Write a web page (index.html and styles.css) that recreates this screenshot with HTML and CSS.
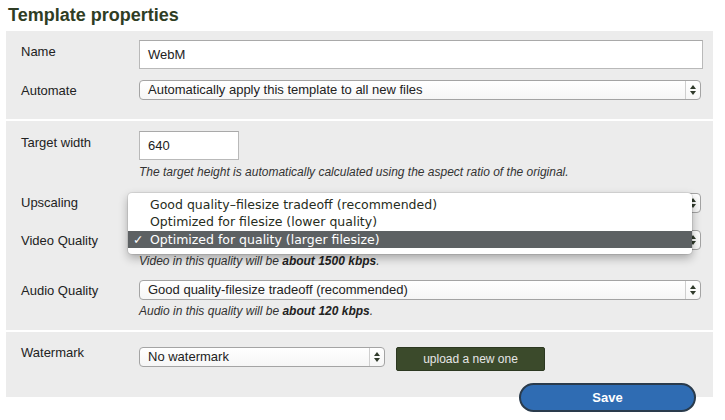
FILE: index.html
```html
<!DOCTYPE html>
<html>
<head>
<meta charset="utf-8">
<link rel="stylesheet" href="styles.css">
</head>
<body>
<h1 class="title">Template properties</h1>

<section class="panel panel-1">
  <div class="row">
    <div class="label">Name</div>
    <div class="field"><div class="input input-wide">WebM</div></div>
  </div>
  <div class="row row-auto">
    <div class="label">Automate</div>
    <div class="field"><div class="select select-wide"><span class="sel-text">Automatically apply this template to all new files</span><span class="arrows"><i class="up"></i><i class="down"></i></span></div></div>
  </div>
</section>

<section class="panel panel-2">
  <div class="row">
    <div class="label">Target width</div>
    <div class="field">
      <div class="input input-small">640</div>
      <div class="hint hint-first">The target height is automatically calculated using the aspect ratio of the original.</div>
    </div>
  </div>
  <div class="row row-up">
    <div class="label">Upscaling</div>
    <div class="field"><div class="select select-wide"><span class="sel-text">Good quality-filesize tradeoff (recommended)</span><span class="arrows"><i class="up"></i><i class="down"></i></span></div></div>
  </div>
  <div class="row row-video">
    <div class="label">Video Quality</div>
    <div class="field">
      <div class="select select-wide"><span class="sel-text">Optimized for quality (larger filesize)</span><span class="arrows"><i class="up"></i><i class="down"></i></span></div>
      <div class="hint">Video in this quality will be <b>about 1500 kbps</b>.</div>
    </div>
  </div>
  <div class="row row-audio">
    <div class="label">Audio Quality</div>
    <div class="field">
      <div class="select select-wide"><span class="sel-text">Good quality-filesize tradeoff (recommended)</span><span class="arrows"><i class="up"></i><i class="down"></i></span></div>
      <div class="hint">Audio in this quality will be <b>about 120 kbps</b>.</div>
    </div>
  </div>

  <ul class="menu">
    <li class="menu-item">Good quality–filesize tradeoff (recommended)</li>
    <li class="menu-item">Optimized for filesize (lower quality)</li>
    <li class="menu-item menu-item-active"><span class="check">✓</span>Optimized for quality (larger filesize)</li>
  </ul>
</section>

<section class="panel panel-3">
  <div class="row">
    <div class="label">Watermark</div>
    <div class="field field-inline">
      <div class="select select-narrow"><span class="sel-text">No watermark</span><span class="arrows"><i class="up"></i><i class="down"></i></span></div>
      <div class="upload">upload a new one</div>
    </div>
  </div>
</section>

<div class="actions">
  <div class="save">Save</div>
</div>
</body>
</html>
```

FILE: styles.css
```css
* { box-sizing: border-box; }

body {
  margin: 0;
  padding: 0 0 0 6px;
  width: 713px;
  background: #ffffff;
  font-family: "Liberation Sans", Arial, sans-serif;
  color: #222;
}

.title {
  margin: 0;
  padding: 4px 0 0 2px;
  height: 31px;
  font-size: 18px;
  font-weight: bold;
  color: #2f3d24;
  line-height: 22px;
}

.panel {
  background: #ececec;
  padding-left: 15px;
  padding-right: 10px;
}

.panel-1 {
  padding-top: 9px;
  padding-bottom: 19px;
  margin-bottom: 2px;
}

.panel-2 {
  position: relative;
  padding-top: 10px;
  padding-bottom: 12px;
  margin-bottom: 2px;
}

.panel-3 {
  padding-top: 15px;
  padding-bottom: 26px;
}

.row {
  display: flex;
  align-items: flex-start;
}

.row-auto { margin-top: 11px; }
.row-up { margin-top: 14px; }
.row-video { margin-top: 17px; }
.row-audio { margin-top: 12px; }

.label {
  width: 118px;
  flex: none;
  font-size: 13px;
  line-height: 18px;
  padding-top: 3px;
  color: #222;
}

.row-auto .label,
.row-video .label,
.row-audio .label { padding-top: 2px; }

.row-up .label { padding-top: 1px; }

.panel-3 .label { margin-top: -3px; padding-top: 0; }

.field { flex: 1; }

.field-inline {
  display: flex;
  align-items: flex-start;
  gap: 11px;
}

.input {
  height: 29px;
  background: #fff;
  border: 1px solid #b9b9b9;
  border-top-color: #a9a9a9;
  font-size: 13px;
  line-height: 27px;
  padding-left: 8px;
  color: #222;
}

.input-wide { width: 564px; }
.input-small { width: 100px; }

.hint {
  font-size: 12px;
  font-style: italic;
  color: #333;
  line-height: 14px;
  margin-top: 4px;
}

.hint-first { margin-top: 5px; }

.hint b { font-weight: bold; color: #222; }

.select {
  position: relative;
  height: 20px;
  background: linear-gradient(#ffffff, #f6f6f6);
  border: 1px solid #a4a4a4;
  border-radius: 4px;
  font-size: 13px;
  line-height: 18px;
  padding-left: 8px;
  color: #222;
  box-shadow: inset 0 1px 0 #fff;
}

.select-wide { width: 562px; }
.select-narrow { width: 246px; }

.arrows {
  position: absolute;
  right: 0;
  top: 0;
  bottom: 0;
  width: 15px;
  border-left: 1px solid #cfcfcf;
  display: flex;
  flex-direction: column;
  align-items: center;
  justify-content: center;
  gap: 2px;
}

.arrows i {
  display: block;
  width: 0;
  height: 0;
  border-left: 3px solid transparent;
  border-right: 3px solid transparent;
}

.arrows .up { border-bottom: 4px solid #2f3a2a; }
.arrows .down { border-top: 4px solid #2f3a2a; }

.menu {
  position: absolute;
  left: 122px;
  top: 72px;
  width: 564px;
  margin: 0;
  padding: 3px 0 6px;
  list-style: none;
  background: #fff;
  border-radius: 4px;
  box-shadow: 0 4px 10px rgba(0,0,0,0.3), 0 0 0 1px rgba(0,0,0,0.08);
  font-family: "DejaVu Sans", "Liberation Sans", sans-serif;
  font-size: 12.5px;
  color: #262c20;
}

.menu-item {
  height: 17px;
  line-height: 17px;
  padding-left: 22px;
  position: relative;
}

.menu-item-active {
  margin-top: 1px;
  background: #5d6163;
  color: #fff;
}

.check {
  position: absolute;
  left: 5px;
  top: 0;
  font-weight: bold;
}

.upload {
  width: 149px;
  height: 24px;
  background: #3b4a2b;
  border: 1px solid #2c3821;
  border-radius: 2px;
  color: #e6e6e6;
  font-size: 12px;
  line-height: 22px;
  text-align: center;
}

.actions {
  display: flex;
  justify-content: flex-end;
  padding-right: 17px;
  margin-top: -14px;
  position: relative;
}

.save {
  width: 177px;
  height: 29px;
  background: #2f6cb3;
  border: 2px solid #2a3b4c;
  border-radius: 15px;
  color: #fff;
  font-size: 13px;
  font-weight: bold;
  line-height: 25px;
  text-align: center;
}
```
